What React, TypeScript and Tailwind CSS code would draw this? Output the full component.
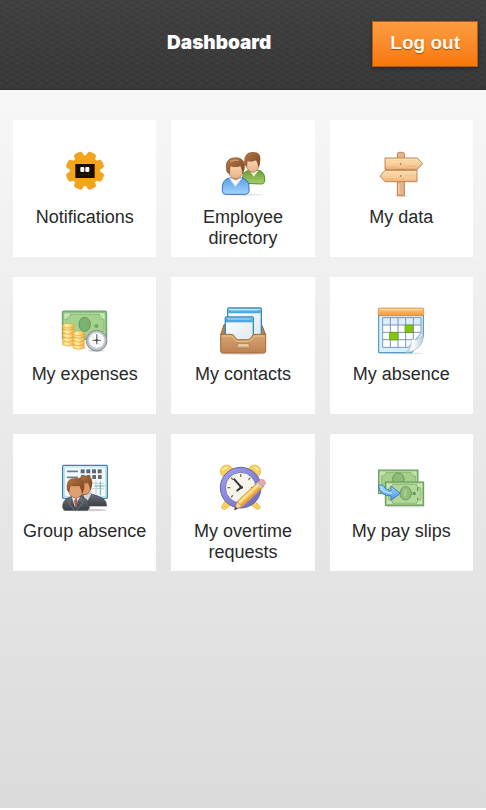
import type { ReactNode } from "react";

function GearIcon() {
  return (
    <svg viewBox="0 0 210 180" className="h-[60px] w-[70px]" aria-hidden="true">
      <g fill="#f5a41a" stroke="#e79c22" strokeWidth="2">
        <circle cx="105" cy="92" r="45" />
        {[22.5, 67.5, 112.5, 157.5, 202.5, 247.5, 292.5, 337.5].map((angle) => (
          <rect
            key={angle}
            x="92"
            y="35"
            width="26"
            height="26"
            rx="7"
            transform={`rotate(${angle} 105 92)`}
          />
        ))}
      </g>
      <circle cx="105" cy="92" r="44" fill="#f5a41a" />
      <rect x="76" y="72" width="58" height="42" fill="#160c02" />
      <rect x="91" y="81" width="12" height="15" rx="3" fill="#fff" />
      <rect x="106" y="81" width="12" height="15" rx="3" fill="#fff" />
      <path d="M87 104h35" stroke="#4a3310" strokeWidth="3" strokeDasharray="5 4" />
    </svg>
  );
}

function PeopleIcon() {
  return (
    <svg viewBox="0 0 210 180" className="h-[60px] w-[70px]" aria-hidden="true">
      <defs>
        <linearGradient id="blueShirt" x2="0" y2="1">
          <stop stopColor="#5a9ee6" />
          <stop offset="1" stopColor="#a3d3ff" />
        </linearGradient>
        <linearGradient id="greenShirt" x2="0" y2="1">
          <stop stopColor="#6d9f35" />
          <stop offset="1" stopColor="#a5cf68" />
        </linearGradient>
        <linearGradient id="hair" x2="1" y2="1">
          <stop stopColor="#b77a48" />
          <stop offset="1" stopColor="#764522" />
        </linearGradient>
        <linearGradient id="skin" x2="0" y2="1">
          <stop stopColor="#ffe3bf" />
          <stop offset="1" stopColor="#e9b184" />
        </linearGradient>
      </defs>
      <ellipse cx="104" cy="164" rx="62" ry="3" fill="#e3e7ea" />
      <path d="M104 130v-20q3-17 20-19h27q16 3 19 21v12q-2 8-9 8z" fill="url(#greenShirt)" stroke="#5b882e" strokeWidth="3" />
      <path d="M125 92l12 18 14-18z" fill="#e9f5d5" />
      <ellipse cx="134" cy="71" rx="20" ry="26" fill="url(#skin)" stroke="#a5704a" strokeWidth="2" />
      <path d="M109 76q-4-39 22-40 28-2 26 23 0 14-6 23-1-13-7-21-12 7-25 3-2 7-1 16z" fill="url(#hair)" />
      <path d="M43 155v-17q3-20 21-24h38q19 4 21 24v17q-3 8-11 8H54q-9 0-11-8z" fill="url(#blueShirt)" stroke="#3973bd" strokeWidth="3" />
      <path d="M64 115l18 25 20-25z" fill="#f4fbff" stroke="#a9caec" strokeWidth="2" />
      <path d="M74 108h18v8q-9 10-18 0z" fill="#d99869" />
      <ellipse cx="83" cy="88" rx="23" ry="28" fill="url(#skin)" stroke="#a5704a" strokeWidth="2" />
      <path d="M57 96q-9-37 17-42 30-5 35 18 2 15-5 30-1-14-6-25-17 7-31 0-3 9-2 24z" fill="url(#hair)" stroke="#8b542e" strokeWidth="2" />
      <path d="M67 65q12-8 24-3" fill="none" stroke="#d69b67" strokeWidth="4" />
    </svg>
  );
}

function SignpostIcon() {
  return (
    <svg viewBox="0 0 210 180" className="h-[60px] w-[70px]" aria-hidden="true">
      <defs>
        <linearGradient id="plank" x2="0" y2="1">
          <stop stopColor="#ffe5b9" />
          <stop offset="1" stopColor="#efb77c" />
        </linearGradient>
      </defs>
      <ellipse cx="105" cy="168" rx="18" ry="3" fill="#dedbd7" />
      <g stroke="#c28253" strokeWidth="3" strokeLinejoin="round">
        <path d="M94 166V42q0-5 6-5h9q6 0 6 5v124z" fill="#e3b587" />
        <path d="M57 54h97l16 17-16 17H57z" fill="url(#plank)" />
        <path d="M153 91H57l-15 17 15 17h96z" fill="url(#plank)" />
      </g>
      <path d="M62 61h88M64 74h24M119 71h32M61 98h88M67 112h22M121 114h27" stroke="#f7d39c" strokeWidth="3" />
      <path d="M65 81h27M118 79h32M62 117h27M119 106h28" stroke="#dca169" strokeWidth="1" />
      <path d="M99 132v29" stroke="#f9d09c" strokeWidth="4" />
      <circle cx="104" cy="72" r="2.5" fill="#a36037" />
      <circle cx="104" cy="108" r="2.5" fill="#a36037" />
    </svg>
  );
}

function ExpensesIcon() {
  return (
    <svg viewBox="0 -5 210 180" className="h-[60px] w-[70px]" aria-hidden="true">
      <defs>
        <linearGradient id="coin">
          <stop stopColor="#ffcd53" />
          <stop offset="0.35" stopColor="#fff1ad" />
          <stop offset="1" stopColor="#f5b445" />
        </linearGradient>
      </defs>
      <rect x="37" y="37" width="133" height="85" rx="4" fill="#8dc282" stroke="#5c9f5d" strokeWidth="3" />
      <rect x="45" y="46" width="117" height="67" fill="#bce0a5" stroke="#dff1cf" strokeWidth="3" />
      <path d="M45 62q15 0 15-15h88q0 15 14 15v36q-14 0-14 15H60z" fill="#a5d28d" stroke="#76ae6d" strokeWidth="2" />
      <ellipse cx="104" cy="77" rx="17" ry="21" fill="#7db272" stroke="#5d985a" strokeWidth="3" />
      <circle cx="139" cy="82" r="6" fill="#6da762" />
      <g fill="url(#coin)" stroke="#e0a043" strokeWidth="2">
        {[129, 117, 105, 93, 81].map((y) => (
          <path key={y} d={`M38 ${y}v9q17 9 34 0v-9z`} />
        ))}
        <ellipse cx="55" cy="81" rx="17" ry="7" />
        {[139, 128, 117, 105].map((y) => (
          <path key={y} d={`M69 ${y}v9q17 9 34 0v-9z`} />
        ))}
        <ellipse cx="86" cy="104" rx="17" ry="7" />
      </g>
      <ellipse cx="139" cy="156" rx="25" ry="4" fill="#d8d8d8" />
      <circle cx="140" cy="126" r="31" fill="#b4bbc1" stroke="#868d94" strokeWidth="3" />
      <circle cx="140" cy="125" r="24" fill="#fff" stroke="#cbd3da" strokeWidth="4" />
      <path d="M140 107v30M127 125h26" fill="none" stroke="#75787c" strokeWidth="4" />
      <path d="M128 113l4 4m17-4l-4 4m-17 21l4-4m17 4l-4-4" stroke="#9b9fa3" strokeWidth="2" />
      <circle cx="140" cy="125" r="4" fill="#4d5054" />
    </svg>
  );
}

function TrayIcon() {
  return (
    <svg viewBox="0 -5 210 180" className="h-[60px] w-[70px]" aria-hidden="true">
      <defs>
        <linearGradient id="paper" x2="1" y2="1">
          <stop stopColor="#fff" />
          <stop offset="1" stopColor="#dce8ef" />
        </linearGradient>
        <linearGradient id="tray" x2="0" y2="1">
          <stop stopColor="#d9a673" />
          <stop offset="1" stopColor="#bd8352" />
        </linearGradient>
      </defs>
      <ellipse cx="105" cy="165" rx="68" ry="3" fill="#d9d4cf" />
      <path d="M38 108l10-30h113l12 30-4 9H43z" fill="#b9844e" stroke="#966438" strokeWidth="3" />
      <rect x="59" y="28" width="101" height="92" rx="4" fill="url(#paper)" stroke="#328bbf" strokeWidth="4" />
      <path d="M61 33h97v11H61z" fill="#4ba8df" />
      <path d="M67 36h84" stroke="#8bd0f4" strokeWidth="3" />
      <rect x="52" y="55" width="84" height="71" rx="3" fill="url(#paper)" stroke="#328bbf" strokeWidth="4" />
      <path d="M54 59h80v12H54z" fill="#4ba8df" />
      <path d="M59 62h69" stroke="#8bd0f4" strokeWidth="3" />
      <path d="M38 107h31q8 0 11 7 4 9 12 9h27q9 0 12-9 3-7 10-7h32v50q0 6-6 6H44q-6 0-6-6z" fill="url(#tray)" stroke="#a46d3d" strokeWidth="3" />
      <path d="M42 112h27q6 1 9 8 5 8 14 8h28q9 0 14-8 3-7 8-8h28" fill="none" stroke="#edc28e" strokeWidth="3" />
      <rect x="87" y="136" width="38" height="12" rx="3" fill="#d8b084" stroke="#a57645" strokeWidth="2" />
      <path d="M91 139h30" stroke="#fff1dc" strokeWidth="3" />
    </svg>
  );
}

function CalendarIcon() {
  return (
    <svg viewBox="0 -5 210 180" className="h-[60px] w-[70px]" aria-hidden="true">
      <defs>
        <linearGradient id="orangeBar" x2="0" y2="1">
          <stop stopColor="#ffc67b" />
          <stop offset="1" stopColor="#f09a43" />
        </linearGradient>
        <linearGradient id="curl">
          <stop stopColor="#b9ccd8" />
          <stop offset="0.4" stopColor="#fff" />
          <stop offset="1" stopColor="#b8ccd8" />
        </linearGradient>
      </defs>
      <ellipse cx="105" cy="164" rx="68" ry="3" fill="#d8dde0" />
      <path d="M38 49h134v65l-34 48H38z" fill="#d9eefb" stroke="#3c8eb9" strokeWidth="3" />
      <rect x="37" y="28" width="136" height="23" rx="3" fill="url(#orangeBar)" stroke="#d58438" strokeWidth="2" />
      <path d="M42 33h126" stroke="#ffe1aa" strokeWidth="3" />
      <path d="M50 57h115v47l-38 42H50z" fill="#fff" />
      <path d="M50 57h115v22H50z" fill="#dfeefd" />
      <path d="M50 57h115v47l-38 42H50zM50 79h115M50 101h115M50 123h94M73 57v89M96 57v89M119 57v89M142 57v68" fill="none" stroke="#7898bc" strokeWidth="3" />
      <g fill="#83c70c" stroke="#649517" strokeWidth="2">
        <rect x="117" y="79" width="24" height="23" />
        <rect x="71" y="101" width="25" height="23" />
      </g>
      <path d="M120 162q17-17 16-42 17 8 36-10v7q-3 25-27 38-13 7-25 7z" fill="url(#curl)" stroke="#98b6c7" strokeWidth="2" />
    </svg>
  );
}

function GroupIcon() {
  return (
    <svg viewBox="0 -10 210 180" className="h-[60px] w-[70px]" aria-hidden="true">
      <defs>
        <linearGradient id="suit" x2="0" y2="1">
          <stop stopColor="#6a7077" />
          <stop offset="1" stopColor="#3c4147" />
        </linearGradient>
        <linearGradient id="groupHair" x2="1" y2="1">
          <stop stopColor="#b5763f" />
          <stop offset="1" stopColor="#754121" />
        </linearGradient>
      </defs>
      <rect x="38" y="24" width="134" height="99" rx="3" fill="#f4fbff" stroke="#3585ae" strokeWidth="4" />
      <rect x="43" y="29" width="124" height="89" fill="none" stroke="#b8dcef" strokeWidth="3" />
      <path d="M51 42h33M51 60h33" stroke="#777f86" strokeWidth="5" />
      {[92, 109, 126, 143].map((x) => (
        <g key={x} fill="#616870">
          <rect x={x} y="36" width="12" height="12" />
          <rect x={x + 1} y="53" width="11" height="12" />
        </g>
      ))}
      <path d="M106 78h56M106 94h56M122 70v42M138 70v42" stroke="#b0bdc5" strokeWidth="2" />
      <path d="M151 72v41M133 86h31" stroke="#65b496" strokeWidth="3" />
      <ellipse cx="104" cy="158" rx="66" ry="4" fill="#cdcdcd" />
      <path d="M82 146q1-29 19-36h23q30 8 38 16 8 8 8 20z" fill="url(#suit)" stroke="#44494f" strokeWidth="2" />
      <path d="M100 110l8 30 16-30z" fill="#cfd4d8" />
      <ellipse cx="105" cy="86" rx="18" ry="26" fill="#dc9a6b" stroke="#87512c" strokeWidth="2" />
      <path d="M84 87q-5-30 16-32 26-3 27 20 0 13-6 24-2-13-7-22-12 4-23-1z" fill="url(#groupHair)" />
      <path d="M38 151q-1-23 18-30l16-6h14l20 9q11 6 12 28l-5 7H43z" fill="url(#suit)" stroke="#44494f" strokeWidth="2" />
      <path d="M65 118l10 31 15-31z" fill="#e9ecee" />
      <path d="M75 124l6-1 2 10-5 22-6-22z" fill="#a8654f" />
      <path d="M64 118l-8 20 17 20M92 118l6 20-18 20" fill="none" stroke="#737a82" strokeWidth="3" />
      <ellipse cx="77" cy="95" rx="22" ry="27" fill="#e0a172" stroke="#8c5430" strokeWidth="2" />
      <path d="M52 99q-4-30 13-34 33-7 37 16 1 14-5 26-4-14-9-23-15 4-26-1-4 7-5 21z" fill="url(#groupHair)" stroke="#7e4824" strokeWidth="2" />
    </svg>
  );
}

function ClockIcon() {
  return (
    <svg viewBox="0 -10 210 180" className="h-[60px] w-[70px]" aria-hidden="true">
      <defs>
        <linearGradient id="clockRim" x2="1" y2="1">
          <stop stopColor="#a3a3ee" />
          <stop offset="1" stopColor="#6a68c0" />
        </linearGradient>
      </defs>
      <g fill="#f8cf5d" stroke="#e2b24b" strokeWidth="2">
        <circle cx="56" cy="42" r="19" />
        <circle cx="139" cy="42" r="19" />
        <path d="M52 128l-12 21q1 9 11 7l20-14zM142 131l15 18q-1 9-11 6l-19-13z" />
      </g>
      <path d="M43 39q7-9 17-7M137 30q10 0 13 10" fill="none" stroke="#fff0a4" strokeWidth="5" />
      <circle cx="98" cy="91" r="61" fill="url(#clockRim)" stroke="#6260b5" strokeWidth="3" />
      <circle cx="98" cy="91" r="46" fill="#f5f4e8" stroke="#7471c6" strokeWidth="3" />
      <path d="M98 50v9M98 122v8M58 91h9M129 91h8M69 61l6 6M127 61l-6 6M69 120l6-6" stroke="#777569" strokeWidth="4" />
      <path d="M77 64l23 26-14 11" fill="none" stroke="#34343d" strokeWidth="6" />
      <circle cx="100" cy="90" r="5" fill="#33343b" />
      <path d="M80 157l7-25 16 15z" fill="#f7d6a2" stroke="#b57b43" strokeWidth="2" />
      <path d="M87 133l64-60 16 15-64 60z" fill="#f8b653" stroke="#c98739" strokeWidth="2" />
      <path d="M90 134l64-60 6 5-65 60z" fill="#ffe18b" />
      <path d="M100 145l65-59" stroke="#dc963c" strokeWidth="4" />
      <path d="M149 74l8-7q6-3 12 3 7 6 1 12l-6 7z" fill="#e7aaaf" stroke="#b88288" strokeWidth="2" />
      <path d="M146 77l15 14" stroke="#ced2d5" strokeWidth="5" />
      <path d="M78 158l5-10 6 6z" fill="#41352e" />
    </svg>
  );
}

function PaySlipIcon() {
  return (
    <svg viewBox="0 -10 210 180" className="h-[60px] w-[70px]" aria-hidden="true">
      <defs>
        <linearGradient id="arrow" x2="0" y2="1">
          <stop stopColor="#a5d7ff" />
          <stop offset="1" stopColor="#4a96db" />
        </linearGradient>
      </defs>
      <path d="M61 148h113" stroke="#d5d9d1" strokeWidth="4" />
      <rect x="38" y="38" width="118" height="71" fill="#9fca85" stroke="#5f9857" strokeWidth="3" />
      <rect x="44" y="44" width="106" height="59" fill="#bfdda7" stroke="#e1f1cd" strokeWidth="2" />
      <path d="M47 57q12 0 13-12h75q0 11 13 11v45H47z" fill="#a8cf8c" stroke="#73a663" strokeWidth="2" />
      <ellipse cx="97" cy="66" rx="17" ry="19" fill="#8fbd78" stroke="#65955a" strokeWidth="3" />
      <rect x="58" y="74" width="115" height="70" fill="#9fca85" stroke="#5f9857" strokeWidth="3" />
      <rect x="64" y="80" width="103" height="58" fill="#c7e2ae" stroke="#e1f1cd" strokeWidth="2" />
      <path d="M67 93q12 0 13-12h72q0 11 13 11v35q-13 0-13 11H80q0-11-13-11z" fill="#b3d798" stroke="#73a663" strokeWidth="2" />
      <ellipse cx="119" cy="108" rx="17" ry="20" fill="#91bd7a" stroke="#699b5c" strokeWidth="3" />
      <path d="M115 96h8l-2 22h-9z" fill="#a9cc90" />
      <rect x="140" y="104" width="9" height="9" fill="#659657" />
      <path d="M155 90v11M155 121v7" stroke="#659657" strokeWidth="4" />
      <path d="M38 84q14-4 17 5 4 10 20 11V86l28 22-28 21v-13q-37-2-37-32z" fill="url(#arrow)" stroke="#3a82c0" strokeWidth="3" strokeLinejoin="round" />
      <path d="M44 89q6 17 34 19" fill="none" stroke="#b8e1ff" strokeWidth="4" />
    </svg>
  );
}

interface Tile {
  label: string;
  icon: ReactNode;
}

const tiles: Tile[] = [
  { label: "Notifications", icon: <GearIcon /> },
  { label: "Employee directory", icon: <PeopleIcon /> },
  { label: "My data", icon: <SignpostIcon /> },
  { label: "My expenses", icon: <ExpensesIcon /> },
  { label: "My contacts", icon: <TrayIcon /> },
  { label: "My absence", icon: <CalendarIcon /> },
  { label: "Group absence", icon: <GroupIcon /> },
  { label: "My overtime requests", icon: <ClockIcon /> },
  { label: "My pay slips", icon: <PaySlipIcon /> },
];

function Header() {
  return (
    <header className="flex h-[90px] items-center border-b border-[#303030] bg-[repeating-linear-gradient(30deg,#ffffff05_0px,#ffffff05_2px,transparent_2px,transparent_5px),repeating-linear-gradient(150deg,#0000000d_0px,#0000000d_2px,transparent_2px,transparent_5px),linear-gradient(#404040,#383838)] pr-2 pb-[2px] pl-[66px]">
      <h1 className="flex-1 text-center font-['Inter','Liberation_Sans',sans-serif] text-[19px] font-black text-white">
        Dashboard
      </h1>
      <button
        type="button"
        className="h-[46px] border border-[#b35c14] bg-linear-to-b from-[#fb9d40] to-[#f97703] px-[17px] text-[19px] font-bold text-[#fff8e8] shadow-[0_1px_3px_#222] text-shadow-[0_1px_1px_#9a5010]"
      >
        Log out
      </button>
    </header>
  );
}

export default function App() {
  return (
    <div className="flex min-h-screen flex-col bg-white pb-[2px] font-['Liberation_Sans',Arial,sans-serif]">
      <Header />
      <main className="flex-1 bg-linear-to-b from-[#f7f7f7] to-[#dbdbdb] px-[13px] pt-[30px] pb-8">
        <nav className="grid grid-cols-3 gap-x-[15px] gap-y-5" aria-label="Dashboard">
          {tiles.map((tile) => (
            <a
              key={tile.label}
              href="#"
              className="flex min-h-[137px] flex-col items-center bg-white px-2 pt-5 text-center text-[18px] leading-[21px] text-[#292929]"
            >
              {tile.icon}
              <span className="mt-[7px]">{tile.label}</span>
            </a>
          ))}
        </nav>
      </main>
    </div>
  );
}
